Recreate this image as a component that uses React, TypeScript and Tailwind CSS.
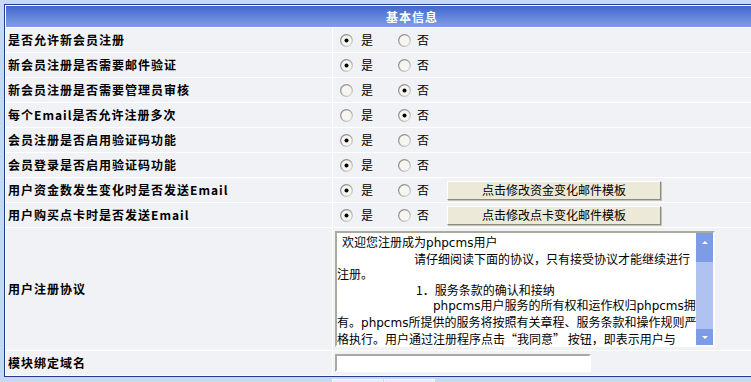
import React from 'react'

interface Row {
    label: string;
    yes: boolean;
    button?: string;
}

const rows: Row[] = [
    { label: '是否允许新会员注册', yes: true },
    { label: '新会员注册是否需要邮件验证', yes: true },
    { label: '新会员注册是否需要管理员审核', yes: false },
    { label: '每个Email是否允许注册多次', yes: false },
    { label: '会员注册是否启用验证码功能', yes: true },
    { label: '会员登录是否启用验证码功能', yes: true },
    { label: '用户资金数发生变化时是否发送Email', yes: true, button: '点击修改资金变化邮件模板' },
    { label: '用户购买点卡时是否发送Email', yes: true, button: '点击修改点卡变化邮件模板' },
]

const Radio: React.FC<{ checked?: boolean }> = ({ checked }) => (
    <svg width="13" height="13" viewBox="0 0 13 13" className="shrink-0">
        <defs>
            <linearGradient id="ring" x1="0" y1="0" x2="1" y2="1">
                <stop offset="0" stopColor="#7c7d7b" />
                <stop offset="0.55" stopColor="#a9aaa6" />
                <stop offset="1" stopColor="#ecebe4" />
            </linearGradient>
        </defs>
        <circle cx="6.5" cy="6.5" r="6.5" fill="url(#ring)" />
        <circle cx="6.5" cy="6.5" r="5.2" fill="#f6f5f0" />
        {checked && <circle cx="6.5" cy="6.5" r="2" fill="#000" />}
    </svg>
)

const Php = () => <span className="font-['DejaVu_Sans',sans-serif]">phpcms</span>

const Agreement = () => (
    <div className="flex w-[380px] h-[116px] border-2 border-t-[#aaa9a2] border-l-[#aaa9a2] border-r-white border-b-white bg-white">
        <div className="flex-1 overflow-hidden pt-[1px] text-[12px] leading-[15.2px] text-black whitespace-nowrap font-['Noto_Sans_CJK_SC',sans-serif]">
            <div className="pl-[5px]">欢迎您注册成为<Php />用户</div>
            <div className="pl-[77px]">请仔细阅读下面的协议，只有接受协议才能继续进行</div>
            <div>注册。</div>
            <div className="pl-[79px]">1．服务条款的确认和接纳</div>
            <div className="pl-[96px]"><Php />用户服务的所有权和运作权归<Php />拥</div>
            <div>有。<Php />所提供的服务将按照有关章程、服务条款和操作规则严</div>
            <div>格执行。用户通过注册程序点击“我同意” 按钮，即表示用户与</div>
            <div><Php />达成协议并接受所有的服务条款。</div>
        </div>
        <div className="w-[17px] flex flex-col bg-[#b0c3f0]">
            <div className="h-[29px] bg-[#7c9de6] flex justify-center pt-[8px]">
                <div className="w-0 h-0 border-l-[3px] border-r-[3px] border-b-[3px] border-l-transparent border-r-transparent border-b-white" />
            </div>
            <div className="flex-1" />
            <div className="h-[16px] bg-[#7c9de6] flex justify-center pt-[7px]">
                <div className="w-0 h-0 border-l-[3px] border-r-[3px] border-t-[3px] border-l-transparent border-r-transparent border-t-white" />
            </div>
        </div>
    </div>
)

const labelCls = "bg-[#f1f2f5] flex items-center pl-[2px] text-[12px] font-bold tracking-[1px] text-black font-['Noto_Sans_CJK_SC',sans-serif]"
const valueCls = "bg-[#f1f2f5] flex items-center text-[12px] text-black font-['Noto_Sans_CJK_SC',sans-serif]"

export default function App() {
    return (
        <div className="w-screen h-screen overflow-hidden bg-[#c8d7f5] pt-[4px] pl-[4px]">
            <div className="w-[816px] border border-[#203d8e] bg-white p-px">
                <div className="grid grid-cols-[326px_1fr] gap-px">
                    <div className="col-span-2 h-[21px] bg-linear-to-b from-[#4366cf] to-[#829fe4] flex items-center justify-center text-white text-[12px] font-bold tracking-[1px] font-['Noto_Sans_CJK_SC',sans-serif]">
                        基本信息
                    </div>
                    {rows.map((r) => (
                        <React.Fragment key={r.label}>
                            <div className={`${labelCls} h-[24px]`}>{r.label}</div>
                            <div className={`${valueCls} h-[24px] pl-[7px]`}>
                                <Radio checked={r.yes} />
                                <span className="ml-[8px]">是</span>
                                <span className="ml-[25px]"><Radio checked={!r.yes} /></span>
                                <span className="ml-[6px]">否</span>
                                {r.button && (
                                    <button className="ml-[18px] w-[214px] h-[19px] bg-[#ece9d8] border border-t-white border-l-white border-r-[#8c8b83] border-b-[#8c8b83] shadow-[1px_1px_0_#c5c2b2] text-[12px] leading-none text-black">
                                        {r.button}
                                    </button>
                                )}
                            </div>
                        </React.Fragment>
                    ))}
                    <div className={`${labelCls} h-[122px]`}>用户注册协议</div>
                    <div className={`${valueCls} h-[122px] pl-[2px] items-start pt-[3px]`}>
                        <Agreement />
                    </div>
                    <div className={`${labelCls} h-[24px]`}>模块绑定域名</div>
                    <div className={`${valueCls} h-[24px] pl-[2px]`}>
                        <input
                            type="text"
                            className="w-[256px] h-[18px] bg-white border-2 border-t-[#aaa9a2] border-l-[#aaa9a2] border-r-white border-b-white outline-none"
                        />
                    </div>
                </div>
            </div>
            <div className="flex mt-[2px] ml-[328px] gap-px">
                <button className="w-[51px] h-[20px] bg-[#e8ecf8] border border-[#f4f6fc] text-[12px]">提交</button>
                <button className="w-[51px] h-[20px] bg-[#e8ecf8] border border-[#f4f6fc] text-[12px]">重置</button>
            </div>
        </div>
    )
}
